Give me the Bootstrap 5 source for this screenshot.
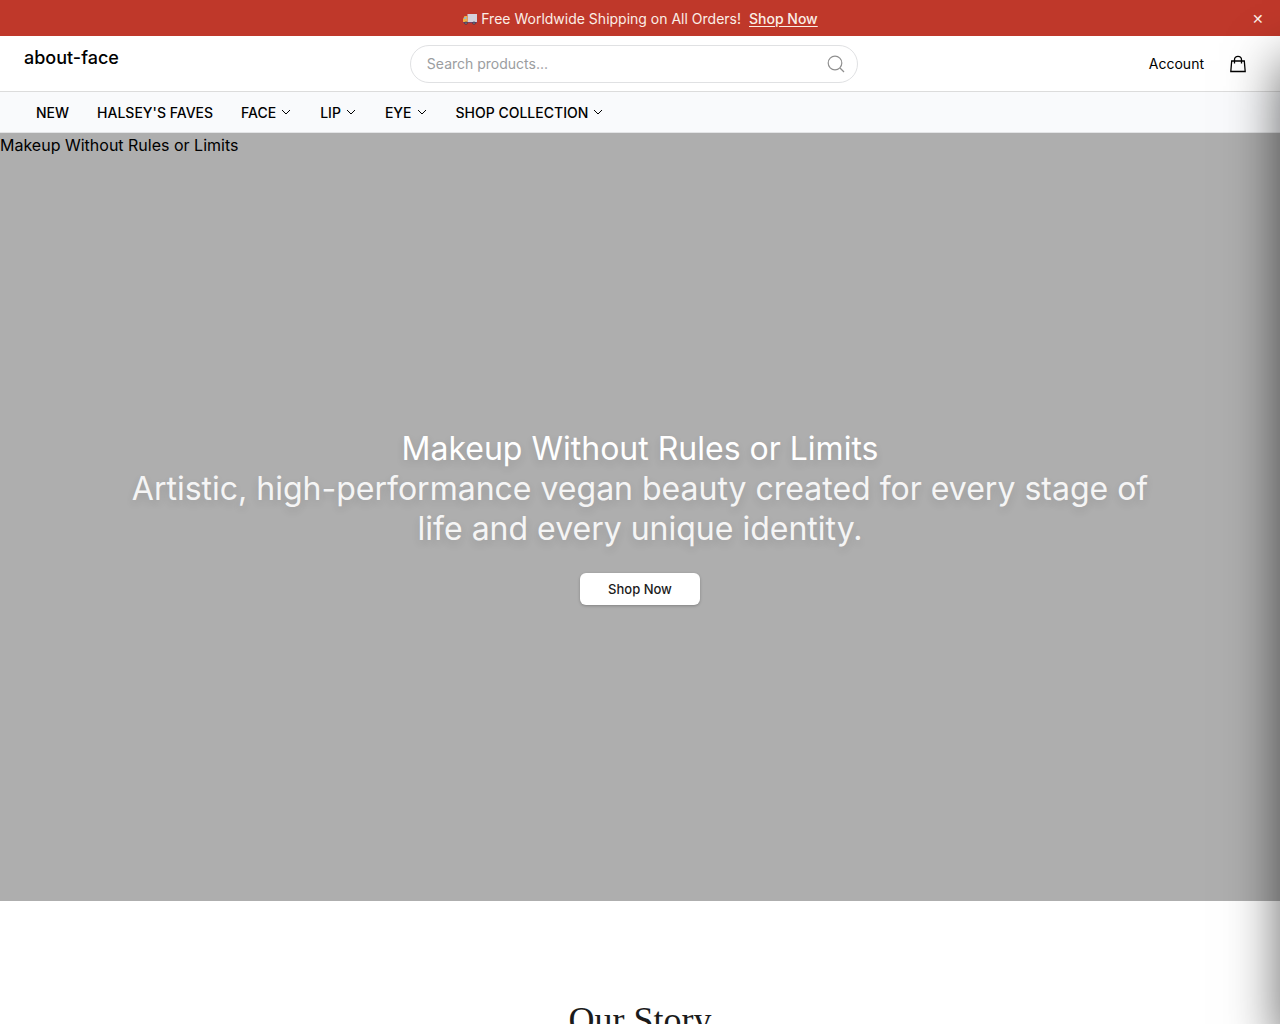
<!DOCTYPE html>
<html lang="en">
<head>
<meta charset="utf-8">
<meta name="viewport" content="width=device-width, initial-scale=1">
<title>about-face</title>
<link href="https://cdn.jsdelivr.net/npm/bootstrap@5.3.0/dist/css/bootstrap.min.css" rel="stylesheet">
<style>
body { font-family: Inter, "Liberation Sans", sans-serif; color: #000; overflow-x: hidden; }
a { color: inherit; }
.promo { background: #bf382a; color: #fbeee6; font-size: 14px; line-height: 20px; padding: 9px 0 7px; }
.promo a { font-weight: 500; text-underline-offset: 2px; margin-left: 8px; }
.promo-close, .promo-close:hover { color: #fbeee6; font-size: 14px; line-height: 20px; right: 12px; }
.truck { width: 16px; height: 12px; margin-right: 3px; }
.topbar { min-height: 56px; padding: 8px 24px; border-bottom: 1px solid #dcdcdc; }
.brand { font-size: 18px; line-height: 28px; font-weight: 500; }
.search-form { flex: 0 1 448px; }
.search-box, .search-box:focus { height: 38px; font-size: 14px; border: 1px solid #e0e1e3; padding: 0 48px 0 16px; }
.search-box::placeholder { color: #9b9da0; }
.search-btn { right: 12px; color: #8f8f8f; }
.account { font-size: 14px; line-height: 20px; }
.mainnav { background: #f9fafc; padding: 11px 36px 9px; gap: 28px; border-bottom: 1px solid #e3e4e6; font-size: 14px; line-height: 20px; font-weight: 500; }
.mainnav a { display: flex; align-items: center; gap: 4px; }
.mainnav svg { margin-bottom: 2px; }
.hero { background: #aeaeae; height: 75vh; }
.hero-alt { font-size: 16px; line-height: 24px; }
.hero-copy { max-width: 1072px; font-size: 32px; line-height: 40px; color: #fff; text-shadow: 0 4px 8px rgba(0,0,0,.12); }
.hero-copy h1, .hero-copy p { font-size: inherit; line-height: inherit; font-weight: 400; margin: 0; }
.hero-copy p { color: #f5f5f5; }
.hero-btn, .hero-btn:hover { background: #fff; color: #1b1b1b; font-size: 13px; line-height: 20px; font-weight: 500; padding: 6px 28px; border: 0; border-radius: 6px; box-shadow: 0 1px 3px rgba(0,0,0,.25); text-shadow: none; }
.story { padding: 96px 24px; }
.story h2 { font-family: "Liberation Serif", serif; font-size: 36px; line-height: 46px; color: #1b1b1b; }
/* closed cart drawer: only its shadow reaches the window */
.drawer { top: 36px; bottom: 0; left: 100%; width: 400px; box-shadow: 0 25px 50px rgba(0,0,0,.6); }
</style>
</head>
<body>
<div class="promo position-relative d-flex align-items-center justify-content-center">
  <svg class="truck" viewBox="0 0 16 12" aria-hidden="true"><path fill="#d5d2dc" d="M5.500 1h9.500v8H5.500z"/><path fill="#f3ad43" d="M2.500 3h3v6.500H1V6z"/><path fill="#8fb9d0" d="M2.700 4h1.600v2H1.700z"/><path fill="#7b3f69" d="M1 9h14v1H1z"/><circle cx="4" cy="10" r="1.600" fill="#353448"/><circle cx="12" cy="10" r="1.600" fill="#353448"/><circle cx="4" cy="10" r=".6" fill="#ddd"/><circle cx="12" cy="10" r=".6" fill="#ddd"/></svg>
  <span>Free Worldwide Shipping on All Orders!</span>
  <a href="#">Shop Now</a>
  <button type="button" class="promo-close btn p-1 border-0 position-absolute" aria-label="Close">✕</button>
</div>
<header>
  <div class="topbar d-flex justify-content-between">
    <a href="#" class="brand text-decoration-none">about-face</a>
    <form class="search-form position-relative d-flex align-items-center">
      <input type="search" class="search-box form-control rounded-pill shadow-none" placeholder="Search products..." aria-label="Search products">
      <button type="button" class="search-btn btn p-0 border-0 d-flex position-absolute" aria-label="Search"><svg width="20" height="20" viewBox="0 0 20 20" fill="none" stroke="currentColor" stroke-width="1.200"><circle cx="9" cy="9" r="6.800"/><path d="M14 14l4 4"/></svg></button>
    </form>
    <div class="d-flex align-items-center gap-4">
      <a href="#" class="account text-decoration-none">Account</a>
      <a href="#" class="d-flex me-2" aria-label="Cart"><svg width="20" height="20" viewBox="0 0 20 20" fill="none" stroke="currentColor" stroke-width="1.300"><path d="M3.700 7h12.600l.9 10.500H2.800z"/><path d="M6.500 9.500V5.800a3.500 3.500 0 0 1 7 0V9.500"/></svg></a>
    </div>
  </div>
  <nav class="mainnav d-flex align-items-center" aria-label="Main">
    <a href="#" class="text-decoration-none">NEW</a>
    <a href="#" class="text-decoration-none">HALSEY'S FAVES</a>
    <a href="#" class="text-decoration-none">FACE <svg width="12" height="12" viewBox="0 0 12 12" fill="none" stroke="currentColor"><path d="M2 4l4 4 4-4"/></svg></a>
    <a href="#" class="text-decoration-none">LIP <svg width="12" height="12" viewBox="0 0 12 12" fill="none" stroke="currentColor"><path d="M2 4l4 4 4-4"/></svg></a>
    <a href="#" class="text-decoration-none">EYE <svg width="12" height="12" viewBox="0 0 12 12" fill="none" stroke="currentColor"><path d="M2 4l4 4 4-4"/></svg></a>
    <a href="#" class="text-decoration-none">SHOP COLLECTION <svg width="12" height="12" viewBox="0 0 12 12" fill="none" stroke="currentColor"><path d="M2 4l4 4 4-4"/></svg></a>
  </nav>
</header>
<main>
  <section class="hero position-relative d-flex align-items-center justify-content-center">
    <span class="hero-alt position-absolute top-0 start-0">Makeup Without Rules or Limits</span>
    <div class="hero-copy text-center px-3">
      <h1>Makeup Without Rules or Limits</h1>
      <p>Artistic, high-performance vegan beauty created for every stage of life and every unique identity.</p>
      <button type="button" class="hero-btn btn d-block mx-auto mt-4">Shop Now</button>
    </div>
  </section>
  <section class="story text-center"><h2>Our Story</h2></section>
</main>
<aside class="drawer position-fixed" aria-hidden="true"></aside>
<script src="https://cdn.jsdelivr.net/npm/bootstrap@5.3.0/dist/js/bootstrap.bundle.min.js"></script>
</body>
</html>
